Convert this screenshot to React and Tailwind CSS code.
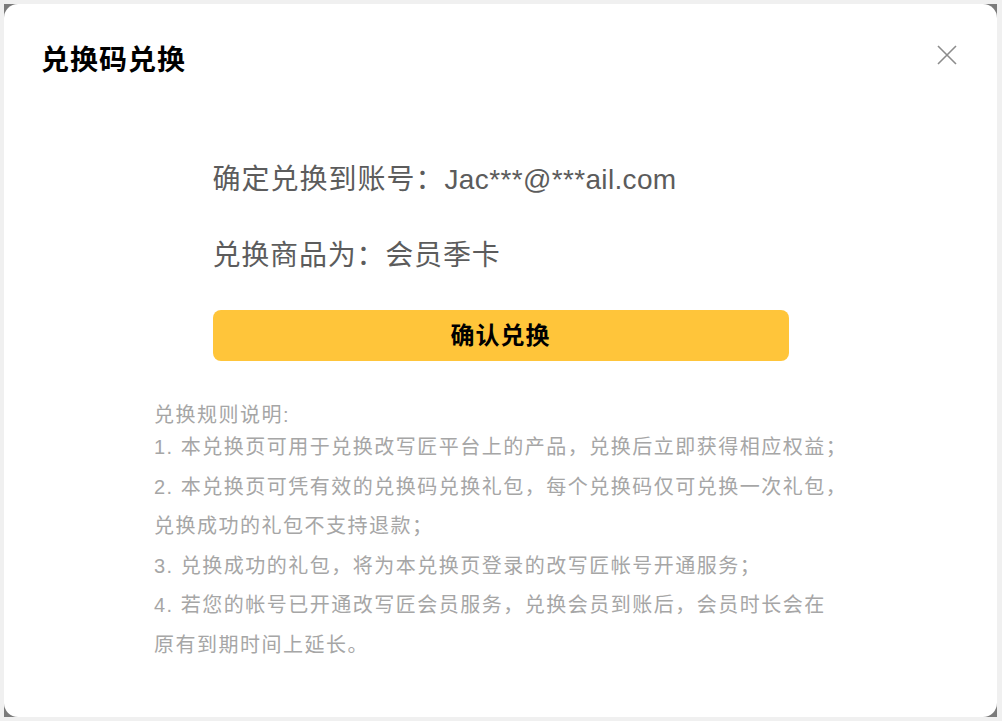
import React from "react";

const rules = [
  "1. 本兑换页可用于兑换改写匠平台上的产品，兑换后立即获得相应权益；",
  "2. 本兑换页可凭有效的兑换码兑换礼包，每个兑换码仅可兑换一次礼包，",
  "兑换成功的礼包不支持退款；",
  "3. 兑换成功的礼包，将为本兑换页登录的改写匠帐号开通服务；",
  "4. 若您的帐号已开通改写匠会员服务，兑换会员到账后，会员时长会在",
  "原有到期时间上延长。",
];

function CloseIcon() {
  return (
    <svg width="20" height="20" viewBox="0 0 20 20" fill="none">
      <path d="M1 1L19 19M19 1L1 19" stroke="#8c8c8c" strokeWidth="1.6" />
    </svg>
  );
}

export default function App() {
  return (
    <div
      className="w-[1002px] h-[721px] bg-[#f0f0f0] pt-[4px] pl-[4px] pr-[5px] pb-[4px]"
      style={{ fontFamily: '"Liberation Sans", "Noto Sans CJK SC", sans-serif' }}
    >
      <div className="h-full bg-[#7b7b7b]">
        <div className="h-full bg-white rounded-[14px]">
          {/* Header */}
          <div className="flex items-start justify-between pl-[37px] pr-[40px] pt-[38px]">
            <h1 className="text-[28px] leading-[38px] font-bold text-black tracking-[1px]">
              兑换码兑换
            </h1>
            <button className="mt-[3px]">
              <CloseIcon />
            </button>
          </div>

          {/* Confirm info */}
          <div className="w-[576px] mx-auto mt-[80px] text-[#5c5c5c]">
            <p className="text-[28px] leading-[40px]">
              <span className="tracking-[1px]">确定兑换到账号：</span>
              <span className="tracking-[0.35px]">Jac***@***ail.com</span>
            </p>
            <p className="text-[28px] leading-[40px] mt-[36px] tracking-[0.8px]">
              兑换商品为：会员季卡
            </p>
            <button className="mt-[34px] w-full h-[51px] rounded-[8px] bg-[#ffc53a] text-[24px] font-bold text-black tracking-[1px]">
              确认兑换
            </button>
          </div>

          {/* Rules */}
          <div className="ml-[150px] mt-[41px] text-[20px] text-[#a6a6a6] tracking-[1.5px] whitespace-nowrap">
            <p className="leading-[26px]">兑换规则说明:</p>
            {rules.map((r) => (
              <p key={r} className="leading-[39.5px]">
                {r}
              </p>
            ))}
          </div>
        </div>
      </div>
    </div>
  );
}
